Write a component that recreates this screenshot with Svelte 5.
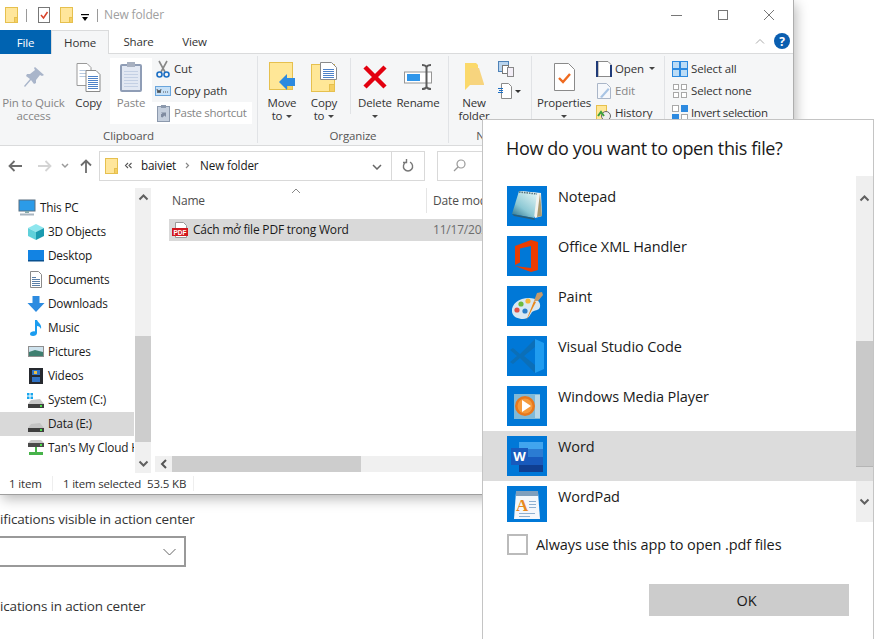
<script>
  const navItems = [
    { label: 'This PC', icon: 'pc', top: true },
    { label: '3D Objects', icon: 'cube' },
    { label: 'Desktop', icon: 'desktop' },
    { label: 'Documents', icon: 'docs' },
    { label: 'Downloads', icon: 'down' },
    { label: 'Music', icon: 'music' },
    { label: 'Pictures', icon: 'pics' },
    { label: 'Videos', icon: 'video' },
    { label: 'System (C:)', icon: 'sys' },
    { label: 'Data (E:)', icon: 'drive', sel: true },
    { label: "Tan's My Cloud Home", icon: 'net' }
  ];
  const apps = [
    { label: 'Notepad', icon: 'notepad' },
    { label: 'Office XML Handler', icon: 'office' },
    { label: 'Paint', icon: 'paint' },
    { label: 'Visual Studio Code', icon: 'vscode' },
    { label: 'Windows Media Player', icon: 'wmp' },
    { label: 'Word', icon: 'word', sel: true },
    { label: 'WordPad', icon: 'wordpad' }
  ];
</script>

{#snippet folderShape()}
  <rect x="0.5" y="0.5" width="12" height="15" fill="#ffe69b" stroke="#e6c04e"/>
  <rect x="9.5" y="10.5" width="3" height="5" fill="#f5cf62" stroke="#e6c04e"/>
{/snippet}

{#snippet chev(d)}
  <svg class="chev" width="11" height="8" viewBox="0 0 11 8" fill="none" stroke="#606060" stroke-width="2">
    <path d={d}/>
  </svg>
{/snippet}

{#snippet navIcon(k)}
  <svg width="20" height="18" viewBox="0 0 20 18">
    {#if k === 'pc'}
      <rect x="1" y="1" width="16" height="11" fill="#2b9be8" stroke="#5a6f80"/>
      <rect x="7" y="12" width="4" height="2" fill="#8aa"/><rect x="2" y="14.5" width="14" height="2" fill="#a9b6c1"/>
    {:else if k === 'cube'}
      <path d="M2 5l8-4 8 4-8 4z" fill="#8ee6ee"/><path d="M2 5l8 4v8l-8-4z" fill="#5fd0da"/><path d="M18 5l-8 4v8l8-4z" fill="#1b9bb0"/>
    {:else if k === 'desktop'}
      <rect x="2" y="3" width="16" height="11" fill="#1283e3"/><rect x="2" y="13" width="16" height="1.5" fill="#08508f"/>
    {:else if k === 'docs'}
      <path d="M4.5.5h8l3 3v13h-11z" fill="#fff" stroke="#8a8a8a"/>
      <path d="M6 6.500h4M6 8.500h8M6 10.500h8M6 12.500h8M6 14.500h8" stroke="#5a7fa8"/>
    {:else if k === 'down'}
      <path d="M6.500 1h7v7h5l-8.500 9L1.500 8h5z" fill="#2d8be0"/>
    {:else if k === 'music'}
      <path d="M9 1h2c1 3 5 4 4 9-1-2-2-3-4-3v7c0 2-2 3-4 3s-3-1-3-2c0-2 3-3 5-2.500z" fill="#1b9df0"/>
    {:else if k === 'pics'}
      <rect x="2.500" y="3.500" width="15" height="10" fill="#cfe3ee" stroke="#8f8f8f"/><path d="M3 9l6-2 8 2v4H3z" fill="#3f7f70"/>
    {:else if k === 'video'}
      <rect x="3" y="1" width="14" height="16" fill="#26292e"/><rect x="6" y="3" width="8" height="5" fill="#2f72c4"/><rect x="6" y="10" width="8" height="5" fill="#2f72c4"/><path d="M8 4h3v3H8z" fill="#e8c04a"/>
    {:else if k === 'sys'}
      <path d="M1 2h2.500v2.500H1zM4.500 2H7v2.500H4.500zM1 5.500h2.500V8H1zM4.500 5.500H7V8H4.500z" fill="#18a6ee"/>
      <path d="M5 9l9-1 4 5H2z" fill="#c8c8c8"/><rect x="2" y="13" width="16" height="4" fill="#3f3f3f"/><rect x="14" y="14" width="2" height="2" fill="#4ade4a"/>
    {:else if k === 'drive'}
      <path d="M5 9l9-1 4 5H2z" fill="#c4c4c4"/><rect x="2" y="13" width="16" height="4" fill="#3f3f3f"/><rect x="14" y="14" width="2" height="2" fill="#4ade4a"/>
    {:else}
      <path d="M5 1h10l3 3H2z" fill="#c8c8c8"/><rect x="2" y="4" width="16" height="4" fill="#4a4a4a"/><rect x="14" y="5" width="2" height="2" fill="#4ade4a"/>
      <rect x="9" y="8" width="2" height="5" fill="#47b34a"/><rect x="3" y="13" width="14" height="3" fill="#47b34a"/>
    {/if}
  </svg>
{/snippet}

{#snippet appIcon(k)}
  <svg class="app-ic" width="40" height="40" viewBox="0 0 40 40">
    <defs>
      <linearGradient id="npg" x1="0.8" y1="0" x2="0.1" y2="1">
        <stop offset="0" stop-color="#dff3f3"/><stop offset="0.6" stop-color="#8cc8d4"/><stop offset="1" stop-color="#2d7590"/>
      </linearGradient>
    </defs>
    <rect width="40" height="40" fill="#0078d7"/>
    {#if k === 'notepad'}
      <path d="M14 5l20 2 1 23-7 2z" fill="#f3f3ee"/>
      <path d="M33 7l2 23-5 1z" fill="#a89a70"/>
      <path d="M12 5l18 2-3 25L5 28z" fill="url(#npg)"/>
      <path d="M5 28l22 4 1 2L7 30z" fill="#2b5f78"/>
      <path d="M12 6l18 2" stroke="#55707a" stroke-width="1.500" stroke-dasharray="1.500 1"/>
    {:else if k === 'office'}
      <path d="M8 10l16-6 7 2v28l-7 2-16-6 16 2V10l-11 2.500v14L8 29z" fill="#eb3c00"/>
    {:else if k === 'paint'}
      <path d="M5 26c-1-8 7-14 17-14 8 0 12 4 11 9-1 4-6 3-8 5-2 3-3 7-9 7-5 0-10-2-11-7z" fill="#d8e8f2"/>
      <circle cx="10" cy="24" r="2.600" fill="#e0524a"/><circle cx="14" cy="18" r="2.600" fill="#6cbb3c"/><circle cx="21" cy="15" r="2.600" fill="#f5b73a"/><circle cx="18" cy="25" r="2.600" fill="#2a7fc9"/>
      <path d="M19 35l8-20 2 1z" fill="#e8891e"/><path d="M27 15l3-8 5-1 1 3-5 6z" fill="#c69a6a"/>
    {:else if k === 'vscode'}
      <path d="M28 3l9 4v26l-9 4z" fill="#1f9cf0"/>
      <path d="M28 3L13 18 6 12l-3 2 7 6-7 6 3 2 7-6 15 15V29L17 20 28 11z" fill="#0b6fb8"/>
    {:else if k === 'wmp'}
      <rect x="7" y="8" width="26" height="25" fill="#7fb9d8"/><rect x="28" y="9" width="5" height="23" fill="#b7d7e8"/>
      <circle cx="18" cy="20" r="10" fill="#e8781e"/><circle cx="18" cy="20" r="7.500" fill="#f59a3c"/><path d="M15 14l9 6-9 6z" fill="#fff"/>
    {:else if k === 'word'}
      <rect x="12" y="6" width="24" height="7" fill="#41a5ee"/><rect x="12" y="13" width="24" height="8" fill="#2b7cd3"/><rect x="12" y="21" width="24" height="8" fill="#185abd"/><rect x="12" y="29" width="24" height="7" fill="#103f91"/>
      <rect x="4" y="12" width="17" height="17" fill="#185abd"/>
      <text x="12.500" y="25" text-anchor="middle" class="wtext">W</text>
    {:else}
      <path d="M9 6h22l2 27H7z" fill="#f4f7fb"/><rect x="9" y="5" width="22" height="5" fill="#7f9fbd"/>
      <text x="15" y="25" text-anchor="middle" class="atext">A</text>
      <path d="M22 15.500h7M22 18.500h7M22 21.500h7M12 27.500h16M12 30.500h11" stroke="#8fb0d0"/>
    {/if}
  </svg>
{/snippet}

<main class="desk">
  <section class="behind">
    <p class="bg-line">ifications visible in action center</p>
    <div class="combo">
      <svg width="13" height="8" viewBox="0 0 13 8" fill="none" stroke="#666"><path d="M.5 1l6 6 6-6"/></svg>
    </div>
    <p class="bg-line second">ications in action center</p>
  </section>

  <div class="win">
    <header class="titlebar">
      <svg class="q1" width="13" height="16" viewBox="0 0 13 16">{@render folderShape()}</svg>
      <i class="tsep"></i>
      <svg class="q2" width="13" height="17" viewBox="0 0 13 17">
        <rect x="0.500" y="0.500" width="11" height="15" fill="#fff" stroke="#777"/>
        <path d="M3 8l2.500 3L9.500 5" fill="none" stroke="#d9432a" stroke-width="1.500"/>
      </svg>
      <svg class="q3" width="13" height="16" viewBox="0 0 13 16">{@render folderShape()}</svg>
      <svg class="q4" width="8" height="7" viewBox="0 0 8 7"><rect width="8" height="1.200"/><path d="M1 3h6L4 7z"/></svg>
      <i class="tsep t2"></i>
      <span class="tname">New folder</span>
      <div class="winbtns">
        <svg width="12" height="12" viewBox="0 0 12 12"><path d="M0 6.500h11" stroke="#777"/></svg>
        <svg width="12" height="12" viewBox="0 0 12 12"><rect x="1.500" y="1.500" width="9" height="9" fill="none" stroke="#777"/></svg>
        <svg width="12" height="12" viewBox="0 0 12 12"><path d="M1 1l10 10M11 1L1 11" stroke="#777"/></svg>
      </div>
    </header>

    <nav class="tabs">
      <span class="tab file">File</span>
      <span class="tab home">Home</span>
      <span class="tab share">Share</span>
      <span class="tab view">View</span>
      <svg class="collapse" width="10" height="6" viewBox="0 0 10 6" fill="none" stroke="#aaa"><path d="M1 5.500l4-4 4 4"/></svg>
      <span class="help">?</span>
    </nav>

    <div class="ribbon">
      <div class="grp g1">
        <div class="gbody">
          <div class="big w67 dim">
            <span class="bi"><svg width="22" height="22" viewBox="0 0 22 22"><path d="M12 1l9 8-2 1-2-1-4 5 0 3-2 1-3-4-6 7-1-1 6-7-4-3 1-2 3 0 5-4-1-2z" fill="#a9b5ca"/></svg></span>
            <span class="lb">Pin to Quick access</span>
          </div>
          <div class="big w43">
            <span class="bi"><svg width="25" height="29" viewBox="0 0 25 29">
              <path d="M1 .5h10l4 4v18H1z" fill="#fff" stroke="#9a9a9a"/><path d="M3.500 7.500h9M3.500 10.500h9M3.500 13.500h9" stroke="#b7c9e0"/>
              <path d="M10 7.500h10l4 4v17H10z" fill="#fff" stroke="#8a8a8a"/><path d="M12 13.500h10M12 15.500h10M12 17.500h10M12 19.500h10M12 21.500h10M12 23.500h10M12 25.500h10" stroke="#4e82c8"/>
            </svg></span>
            <span class="lb">Copy</span>
          </div>
          <div class="big w42 hot dim">
            <span class="bi"><svg width="22" height="30" viewBox="0 0 22 30">
              <rect x="1" y="3" width="20" height="26" rx="1" fill="#e2e8f3" stroke="#8f9db6" stroke-width="2"/>
              <rect x="7" y="0" width="8" height="5" fill="#a7b0c0"/>
              <path d="M4 9.500h14M4 12.500h14M4 15.500h14M4 18.500h14M4 21.500h14M4 24.500h14" stroke="#c4d0e4"/>
            </svg></span>
            <span class="lb">Paste</span>
          </div>
          <div class="col c1">
            <div class="sm"><span class="si"><svg width="14" height="18" viewBox="0 0 14 18" fill="none"><path d="M3 1l6 11M11 1L5 12" stroke="#888" stroke-width="1.600"/><circle cx="3.500" cy="14.500" r="2.500" stroke="#1d6fc4" stroke-width="1.600"/><circle cx="10.500" cy="14.500" r="2.500" stroke="#1d6fc4" stroke-width="1.600"/></svg></span>Cut</div>
            <div class="sm"><span class="si"><svg width="16" height="10" viewBox="0 0 16 10"><rect x=".5" y=".5" width="15" height="9" fill="#c6e0f7" stroke="#6aa5dc"/><path d="M2 3l1 4 1-3 1 3 1-4M8 6h1M10 6h1M12 6h1" fill="none" stroke="#333" stroke-width=".8"/></svg></span>Copy path</div>
            <div class="sm hot dim tight"><span class="si"><svg width="13" height="17" viewBox="0 0 13 17"><rect x=".5" y="1.500" width="12" height="15" fill="#c5cfdd" stroke="#8c99ad"/><rect x="4" y="0" width="5" height="3" fill="#8c99ad"/><path d="M4 12V9h1.500l-1.500-1.500h5V12L7.500 10.500 5.500 12.500z" fill="#7f8ba0"/></svg></span>Paste shortcut</div>
          </div>
        </div>
        <div class="glabel">Clipboard</div>
      </div>

      <div class="grp g2">
        <div class="gbody">
          <div class="big w42">
            <span class="bi"><svg width="27" height="30" viewBox="0 0 27 30"><rect x=".5" y=".5" width="23" height="27" fill="#ffe797" stroke="#e6c04e"/><rect x="18.500" y="20.500" width="5" height="7" fill="#f5cf62" stroke="#e6c04e"/><path d="M10 20l8-8v4h8v8h-8v4z" fill="#2d8ae0"/></svg></span>
            <span class="lb pl">{'Move\nto'}<b class="arr"></b></span>
          </div>
          <div class="big w42">
            <span class="bi"><svg width="27" height="30" viewBox="0 0 27 30"><rect x=".5" y="2.500" width="23" height="27" fill="#ffe797" stroke="#e6c04e"/><rect x="18.500" y="22.500" width="5" height="7" fill="#f5cf62" stroke="#e6c04e"/><path d="M9.500.5h11l5 5v12h-16z" fill="#fff" stroke="#8a8a8a"/><path d="M12 7.500h11M12 9.500h11M12 11.500h11M12 13.500h11M12 15.500h11" stroke="#4e82c8"/></svg></span>
            <span class="lb pl">{'Copy\nto'}<b class="arr"></b></span>
          </div>
          <i class="vsep"></i>
          <div class="big w40">
            <span class="bi"><svg width="26" height="26" viewBox="0 0 26 26"><path d="M3 3l20 20M23 3L3 23" stroke="#e3000f" stroke-width="4.500"/></svg></span>
            <span class="lb">Delete<b class="arr blk"></b></span>
          </div>
          <div class="big w46">
            <span class="bi"><svg width="28" height="26" viewBox="0 0 28 26"><rect x=".5" y="8" width="27" height="11" fill="#fff" stroke="#969696"/><rect x="3" y="10" width="13" height="7" fill="#2f96ea"/><path d="M18 1c3 0 4 1 4.500 2C23 2 24 1 27 1M22.500 3v20M18 25c3 0 4-1 4.500-2 .5 1 1.500 2 4.500 2" fill="none" stroke="#5c5c5c" stroke-width="2"/></svg></span>
            <span class="lb">Rename</span>
          </div>
        </div>
        <div class="glabel">Organize</div>
      </div>

      <div class="grp g3">
        <div class="gbody">
          <div class="big w42">
            <span class="bi"><svg width="19" height="28" viewBox="0 0 19 28"><path d="M0 0h11l2 2v20H5L0 27z" fill="#fbd96b"/><path d="M5 5h9l5 16v1H5z" fill="#f7d47e"/></svg></span>
            <span class="lb pl">{'New\nfolder'}</span>
          </div>
          <div class="col c3">
            <div class="ni"><svg width="17" height="17" viewBox="0 0 17 17"><rect x=".5" y=".5" width="10" height="10" fill="#b9d4ee" stroke="#4e82b8"/><rect x="4.500" y="4.500" width="6" height="8" fill="#fff" stroke="#777"/><rect x="9.500" y="6.500" width="6" height="9" fill="#f3eef7" stroke="#888"/></svg></div>
            <div class="ni"><svg width="24" height="17" viewBox="0 0 24 17"><path d="M3.500.5h7l3 3v12h-10z" fill="#fff" stroke="#8a8a8a"/><path d="M0 5.500h5M1 7.500h4M0 9.500h5" stroke="#1d6fc4"/><path d="M17 7h6l-3 3z" fill="#333"/></svg></div>
          </div>
        </div>
        <div class="glabel">New</div>
      </div>

      <div class="grp g4">
        <div class="gbody">
          <div class="big w52">
            <span class="bi"><svg width="21" height="28" viewBox="0 0 21 28"><path d="M.5.500h14l6 6v21H.5z" fill="#fff" stroke="#8a8a8a"/><path d="M5 15l4 4 7-8" fill="none" stroke="#ef6a1f" stroke-width="2.400"/></svg></span>
            <span class="lb">Properties<b class="arr blk"></b></span>
          </div>
          <div class="col c4">
            <div class="sm"><span class="si"><svg width="16" height="16" viewBox="0 0 16 16"><path d="M2 .5h10l3 3V15.500H2z" fill="#fff" stroke="#8a8a8a"/><rect x="0" y="0" width="2" height="16" fill="#1f3a78"/><rect x="14" y="4" width="2" height="12" fill="#1f3a78"/></svg></span>Open <b class="arr a2"></b></div>
            <div class="sm dim"><span class="si"><svg width="14" height="16" viewBox="0 0 14 16"><path d="M.5.500h9l4 4v11H.5z" fill="#f6f8fb" stroke="#aab6c8"/><path d="M3 14L11 5l1.500 1.500L5 15z" fill="#a8c4e4"/></svg></span>Edit</div>
            <div class="sm"><span class="si"><svg width="16" height="16" viewBox="0 0 16 16"><rect x=".5" y=".5" width="10" height="14" fill="#ffe797" stroke="#e6c04e"/><circle cx="10" cy="11" r="4.500" fill="#eee" stroke="#666"/><path d="M2 11l3-4 3 4" fill="none" stroke="#3ba03b" stroke-width="2"/></svg></span>History</div>
          </div>
        </div>
        <div class="glabel"></div>
      </div>

      <div class="grp g5">
        <div class="gbody">
          <div class="col">
            <div class="sm"><span class="si"><svg width="16" height="16" viewBox="0 0 16 16"><rect width="16" height="16" fill="#2d8ae0"/><path d="M1 1h6v6H1zM9 1h6v6H9zM1 9h6v6H1zM9 9h6v6H9z" fill="#bcdcf6"/></svg></span>Select all</div>
            <div class="sm"><span class="si"><svg width="14" height="14" viewBox="0 0 14 14" fill="#fff" stroke="#a8a8a8"><rect x=".5" y=".5" width="5" height="5"/><rect x="8.500" y=".5" width="5" height="5"/><rect x=".5" y="8.500" width="5" height="5"/><rect x="8.500" y="8.500" width="5" height="5"/></svg></span>Select none</div>
            <div class="sm tight"><span class="si"><svg width="16" height="16" viewBox="0 0 16 16"><rect x=".5" y=".5" width="6" height="6" fill="#fff" stroke="#a8a8a8"/><rect x="9" y="0" width="7" height="7" fill="#2d8ae0"/><rect x="0" y="9" width="7" height="7" fill="#2d8ae0"/><rect x="9.500" y="9.500" width="6" height="6" fill="#fff" stroke="#a8a8a8"/></svg></span>Invert selection</div>
          </div>
        </div>
        <div class="glabel"></div>
      </div>
    </div>

    <div class="navbar">
      <svg class="n1" width="14" height="12" viewBox="0 0 14 12" fill="none" stroke="#6d6d6d" stroke-width="1.800"><path d="M6.500 1L1.500 6l5 5M2 6h12"/></svg>
      <svg class="n2" width="14" height="12" viewBox="0 0 14 12" fill="none" stroke="#d4d4d4" stroke-width="1.800"><path d="M7.500 1l5 5-5 5M12 6H0"/></svg>
      <svg class="n3" width="8" height="6" viewBox="0 0 8 6" fill="none" stroke="#9a9a9a" stroke-width="1.500"><path d="M1 1l3 3 3-3"/></svg>
      <svg class="n4" width="12" height="14" viewBox="0 0 12 14" fill="none" stroke="#6d6d6d" stroke-width="1.800"><path d="M1 6.500l5-5 5 5M6 2v12"/></svg>
      <div class="addr">
        <svg class="afold" width="13" height="16" viewBox="0 0 13 16">{@render folderShape()}</svg>
        <svg class="dbl" width="8" height="7" viewBox="0 0 8 7" fill="none" stroke="#555" stroke-width="1.100"><path d="M4 1L1.500 3.500 4 6M7.500 1L5 3.500 7.500 6"/></svg>
        <span class="crumb">baiviet</span>
        <svg class="csep" width="5" height="7" viewBox="0 0 5 7" fill="none" stroke="#888" stroke-width="1.200"><path d="M1 1l2.500 2.500L1 6"/></svg>
        <span class="crumb">New folder</span>
        <svg class="adrop" width="10" height="6" viewBox="0 0 10 6" fill="none" stroke="#666" stroke-width="1.500"><path d="M1 1l4 4 4-4"/></svg>
        <span class="arefresh">
          <svg width="12" height="13" viewBox="0 0 12 13" fill="none" stroke="#777" stroke-width="1.400"><path d="M4 3.200a4.600 4.600 0 1 0 4 0M4.500 0v3.500H1"/></svg>
        </span>
      </div>
      <div class="search">
        <svg width="13" height="13" viewBox="0 0 13 13" fill="none" stroke="#999" stroke-width="1.200"><circle cx="8" cy="5" r="4"/><path d="M5 8l-4 4"/></svg>
      </div>
    </div>

    <div class="mainrow">
      <aside class="side">
        <ul class="tree">
          {#each navItems as it}
            <li class="node" class:top={it.top} class:sel={it.sel}>
              {@render navIcon(it.icon)}
              <span class="nlabel">{it.label}</span>
            </li>
          {/each}
        </ul>
        <div class="vbar">
          <div class="vtrack up">{@render chev('M1.500 6.500L5.500 2.500l4 4')}</div>
          <div class="vthumb"></div>
          <div class="vtrack dn">{@render chev('M1.500 1.500l4 4 4-4')}</div>
        </div>
      </aside>
      <div class="pane">
        <svg class="sortcaret" width="10" height="6" viewBox="0 0 10 6" fill="none" stroke="#888"><path d="M1 5l4-4 4 4"/></svg>
        <div class="phead">
          <span class="cname">Name</span>
          <span class="cdate">Date modified</span>
        </div>
        <div class="frow">
          <span class="fname">
            <svg width="17" height="17" viewBox="0 0 17 17"><path d="M3.500.5h8l3 3v12h-11z" fill="#fff" stroke="#9a9a9a"/><rect x="0" y="6" width="16" height="8" fill="#d2181f"/><text x="8" y="12.500" text-anchor="middle" class="pdft">PDF</text></svg>
            Cách mở file PDF trong Word
          </span>
          <span class="fdate">11/17/2021 10:25 AM</span>
        </div>
        <div class="hbar">
          <span class="hl"><svg width="7" height="10" viewBox="0 0 7 10" fill="none" stroke="#555" stroke-width="2"><path d="M6 1L2 5l4 4"/></svg></span>
          <span class="hthumb"></span>
        </div>
      </div>
    </div>

    <footer class="status">
      <span class="s1">1 item</span>
      <span class="s2">1 item selected</span>
      <span class="s3">53.5 KB</span>
    </footer>
  </div>

  <div class="dlg">
    <h1 class="dtitle">How do you want to open this file?</h1>
    <div class="listwrap">
      <ul class="applist">
        {#each apps as a}
          <li class="app" class:sel={a.sel}>
            {@render appIcon(a.icon)}
            <span class="aname">{a.label}</span>
          </li>
        {/each}
      </ul>
      <div class="dbar">
        <div class="dtrack first">{@render chev('M1.500 6.500L5.500 2.500l4 4')}</div>
        <div class="dthumb"></div>
        <div class="dhl"></div>
        <div class="dtrack last">{@render chev('M1.500 1.500l4 4 4-4')}</div>
      </div>
    </div>
    <label class="always"><span class="cb"></span>Always use this app to open .pdf files</label>
    <div class="actions"><button class="ok">OK</button></div>
  </div>
</main>

<style>
  :global(body) { margin: 0; overflow: hidden; background: #fff; }
  * { box-sizing: border-box; }
  .desk {
    position: relative; width: 875px; height: 639px; overflow: hidden; background: #fff;
    font-family: "Open Sans", "Noto Sans", sans-serif; font-size: 11.5px; color: #1a1a1a;
    letter-spacing: -0.15px;
  }
  ul { list-style: none; margin: 0; padding: 0; }

  /* behind the windows */
  .behind { padding-top: 510px; font-size: 13.5px; color: #333; }
  .bg-line { margin: 0; line-height: 19px; letter-spacing: -0.16px; }
  .second { margin-top: 30px; }
  .combo {
    width: 189px; height: 31px; margin-top: 7px; margin-left: -3px; border: 2px solid #999; background: #fff;
    display: flex; align-items: center; justify-content: flex-end; padding-right: 8px;
  }

  /* explorer window */
  .win {
    position: absolute; left: 0; top: 0; width: 794px; height: 495px; background: #fff;
    border-right: 1px solid #aeaeae; border-bottom: 1px solid #9f9f9f;
    box-shadow: 2px 4px 12px rgba(0,0,0,.28);
    display: flex; flex-direction: column;
  }
  .titlebar { height: 30px; display: flex; align-items: center; padding-left: 5px; flex: none; }
  .titlebar svg { flex: none; }
  .tsep { width: 1px; height: 13px; background: #9a9a9a; margin-left: 8px; }
  .q2 { margin-left: 11px; }
  .q3 { margin-left: 9px; }
  .q4 { margin-left: 8px; margin-top: 4px; }
  .t2 { margin-left: 8px; }
  .tname { margin-left: 6px; color: #a0a0a0; font-size: 12px; padding-bottom: 1px; }
  .winbtns { margin-left: auto; display: flex; gap: 34px; padding-right: 18px; }

  .tabs { height: 24px; display: flex; align-items: stretch; position: relative; border-bottom: 1px solid #dadbdc; flex: none; }
  .tab { display: flex; align-items: center; justify-content: center; color: #333; }
  .file { width: 51px; background: #0063b1; color: #fff; margin-bottom: -1px; }
  .home { width: 58px; background: #f5f6f7; border: 1px solid #dadbdc; border-bottom: 0; margin-bottom: -1px; z-index: 1; }
  .share { width: 59px; }
  .view { width: 53px; }
  .collapse { position: absolute; left: 755px; top: 8px; }
  .help {
    position: absolute; left: 774px; top: 3px; width: 16px; height: 16px; border-radius: 50%;
    background: #0a5eb0; color: #fff; font-weight: 700; font-size: 12px; display: flex; align-items: center; justify-content: center;
  }

  .ribbon { height: 92px; background: #f5f6f7; border-bottom: 1px solid #dadbdc; display: flex; flex: none; }
  .grp { display: flex; flex-direction: column; padding-top: 4px; border-right: 1px solid #e1e3e6; margin-top: 2px; margin-bottom: 2px; }
  .grp .gbody { display: flex; height: 68px; margin-top: -2px; }
  .glabel { text-align: center; color: #555; line-height: 14px; margin-top: 3px; }
  .g1 { width: 258px; }
  .g2 { width: 191px; padding-left: 3px; }
  .g3 { width: 83px; padding-left: 4px; }
  .g3 .glabel { margin-left: -8px; }
  .g4 { width: 133px; padding-left: 6px; }
  .g5 { flex: 1; padding-left: 7px; border-right: 0; }
  .g2 .glabel { margin-left: -3px; }
  .big { display: flex; flex-direction: column; align-items: center; text-align: center; color: #333; flex: none; height: 66px; }
  .big.hot, .sm.hot { background: #fff; }
  .bi { height: 38px; display: flex; align-items: center; justify-content: center; flex: none; }
  .lb { line-height: 13px; }
  .pl { white-space: pre-line; }
  .w67 { width: 67px; } .w43 { width: 43px; } .w42 { width: 42px; } .w40 { width: 40px; } .w46 { width: 46px; } .w52 { width: 52px; }
  .dim { color: #858585; }
  .col { display: flex; flex-direction: column; }
  .c1 { width: 100px; }
  .c3 { padding-left: 3px; padding-top: 3px; gap: 5px; }
  .c4 { margin-left: 6px; }
  .ni { height: 17px; }
  .sm { height: 22px; display: flex; align-items: center; color: #333; white-space: nowrap; padding: 0 0 2px 3px; }
  .sm.dim { color: #858585; }
  .tight { letter-spacing: -0.34px; }
  .si { width: 16px; margin: 2px 3px 0 0; display: flex; align-items: center; justify-content: center; flex: none; }
  .c4 .sm { padding-left: 0; }
  .g5 .sm { padding-left: 0; }
  .vsep { width: 1px; height: 56px; background: #e1e3e6; margin: 0 4px 0 5px; }
  .arr { display: inline-block; width: 0; height: 0; border-left: 3px solid transparent; border-right: 3px solid transparent; border-top: 3px solid #444; vertical-align: middle; margin-left: 4px; }
  .arr.blk { display: block; margin: 6px auto 0; }
  .a2 { margin-left: 5px; }

  .navbar { height: 42px; display: flex; align-items: center; flex: none; padding-bottom: 3px; }
  .navbar > svg { flex: none; }
  .n1 { margin-left: 8px; } .n2 { margin-left: 16px; } .n3 { margin-left: 9px; } .n4 { margin-left: 11px; }
  .addr {
    width: 326px; height: 30px; margin-left: 7px; border: 1px solid #d9d9d9; display: flex; align-items: center; padding-left: 5px; position: relative; font-size: 11.7px;
  }
  .afold { flex: none; }
  .dbl { margin-left: 6px; margin-right: 9px; flex: none; }
  .csep { margin: 0 10px 0 9px; flex: none; }
  .crumb { color: #1a1a1a; padding-bottom: 1px; }
  .adrop { position: absolute; left: 272px; top: 12px; }
  .arefresh { position: absolute; right: 0; top: 0; bottom: 0; width: 33px; border-left: 1px solid #d9d9d9; display: flex; align-items: center; justify-content: center; }
  .search { width: 300px; height: 30px; margin-left: 12px; border: 1px solid #d9d9d9; display: flex; align-items: center; padding-left: 15px; }

  .mainrow { flex: 1; display: flex; min-height: 0; }
  .side { width: 151px; display: flex; flex: none; }
  .tree { width: 135px; padding-top: 8px; overflow: hidden; flex: none; }
  .node { height: 24px; display: flex; align-items: center; padding: 0 0 2px 26px; gap: 2px; color: #1a1a1a; white-space: nowrap; overflow: hidden; margin-right: 1px; font-size: 11.8px; letter-spacing: -0.2px; }
  .node.top { padding-left: 18px; }
  .node.sel { background: #d9d9d9; }
  .node svg { flex: none; margin-top: 2px; }
  .vbar { width: 16px; display: flex; flex-direction: column; flex: none; }
  .vtrack { background: #f0f0f0; display: flex; justify-content: center; }
  .vtrack.up { height: 148px; padding-top: 5px; }
  .vtrack.dn { flex: 1; align-items: flex-end; padding-bottom: 5px; }
  .vthumb { height: 106px; background: #cdcdcd; }
  .chev { flex: none; }
  .pane { flex: 1; margin-left: 4px; display: flex; flex-direction: column; position: relative; min-width: 0; }
  .sortcaret { position: absolute; left: 136px; top: 0; }
  .phead { height: 25px; display: flex; align-items: center; padding-left: 17px; color: #4d4d4d; position: relative; margin-bottom: 6px; font-size: 12px; }
  .cdate { position: absolute; left: 271px; border-left: 1px solid #e5e5e5; padding-left: 6px; height: 25px; top: 0; display: flex; align-items: center; }
  .frow { height: 22px; margin-left: 14px; background: #d9d9d9; display: flex; align-items: center; position: relative; font-size: 12px; padding-bottom: 2px; letter-spacing: -0.2px; }
  .fname { display: flex; align-items: center; gap: 4px; padding-left: 3px; }
  .fname svg { margin-top: 2px; flex: none; }
  .fdate { position: absolute; left: 264px; color: #6d6d6d; white-space: nowrap; }
  .hbar { margin-top: auto; height: 16px; background: #f0f0f0; display: flex; align-items: center; margin-bottom: 1px; }
  .hl { width: 17px; display: flex; justify-content: center; }
  .hthumb { width: 189px; height: 16px; background: #cdcdcd; }

  .status { height: 21px; display: flex; align-items: center; color: #333; flex: none; position: relative; font-size: 11.5px; }
  .s1 { width: 53px; padding-left: 9px; border-right: 1px solid #eee; }
  .s2 { margin-left: 10px; letter-spacing: -0.2px; }
  .s3 { margin-left: 6px; padding-right: 7px; border-right: 1px solid #eee; }

  /* dialog */
  .dlg {
    position: absolute; left: 482px; top: 119px; width: 392px; height: 520px; background: #fff;
    border: 1px solid #c4c4c4; border-bottom: 0; display: flex; flex-direction: column;
  }
  .dtitle { margin: 15px 0 0 23px; font-weight: 400; font-size: 18px; line-height: 27px; color: #1a1a1a; letter-spacing: -0.36px; }
  .listwrap { position: relative; height: 346px; margin-top: 14px; flex: none; overflow: hidden; }
  .applist { padding-top: 5px; }
  .app { height: 50px; display: flex; padding: 5px 0 5px 24px; }
  .app.sel { background: #dcdcdc; }
  .app-ic { flex: none; }
  .aname { margin-left: 11px; font-size: 14.5px; line-height: 20px; margin-top: 1px; color: #1a1a1a; letter-spacing: -0.1px; }
  .dbar { position: absolute; right: 0; top: 0; bottom: 0; width: 17px; display: flex; flex-direction: column; }
  .dtrack { background: #efefef; display: flex; justify-content: center; align-items: center; }
  .first { height: 165px; align-items: flex-start; padding-top: 18px; }
  .dthumb { height: 126px; background: #c9c9c9; border-bottom: 1px solid #b5b5b5; flex: none; }
  .dhl { height: 14px; background: #dcdcdc; flex: none; }
  .last { flex: 1; }
  .wtext { font: 700 13px "Open Sans", sans-serif; fill: #fff; }
  .atext { font: 700 17px "Liberation Serif", serif; fill: #e8891e; }
  .pdft { font: 700 6.5px "Liberation Sans", sans-serif; fill: #fff; letter-spacing: 0; }
  .always { display: flex; align-items: center; margin: 12px 0 0 24px; font-size: 14.5px; color: #1a1a1a; letter-spacing: -0.1px; }
  .cb { width: 21px; height: 21px; border: 2px solid #bbb; margin-right: 8px; flex: none; }
  .actions { margin-top: 29px; display: flex; justify-content: flex-end; padding-right: 24px; }
  .ok { width: 200px; height: 32px; background: #ccc; border: 0; font: inherit; font-size: 14.5px; color: #1a1a1a; padding: 0 5px 0 0; }
</style>
